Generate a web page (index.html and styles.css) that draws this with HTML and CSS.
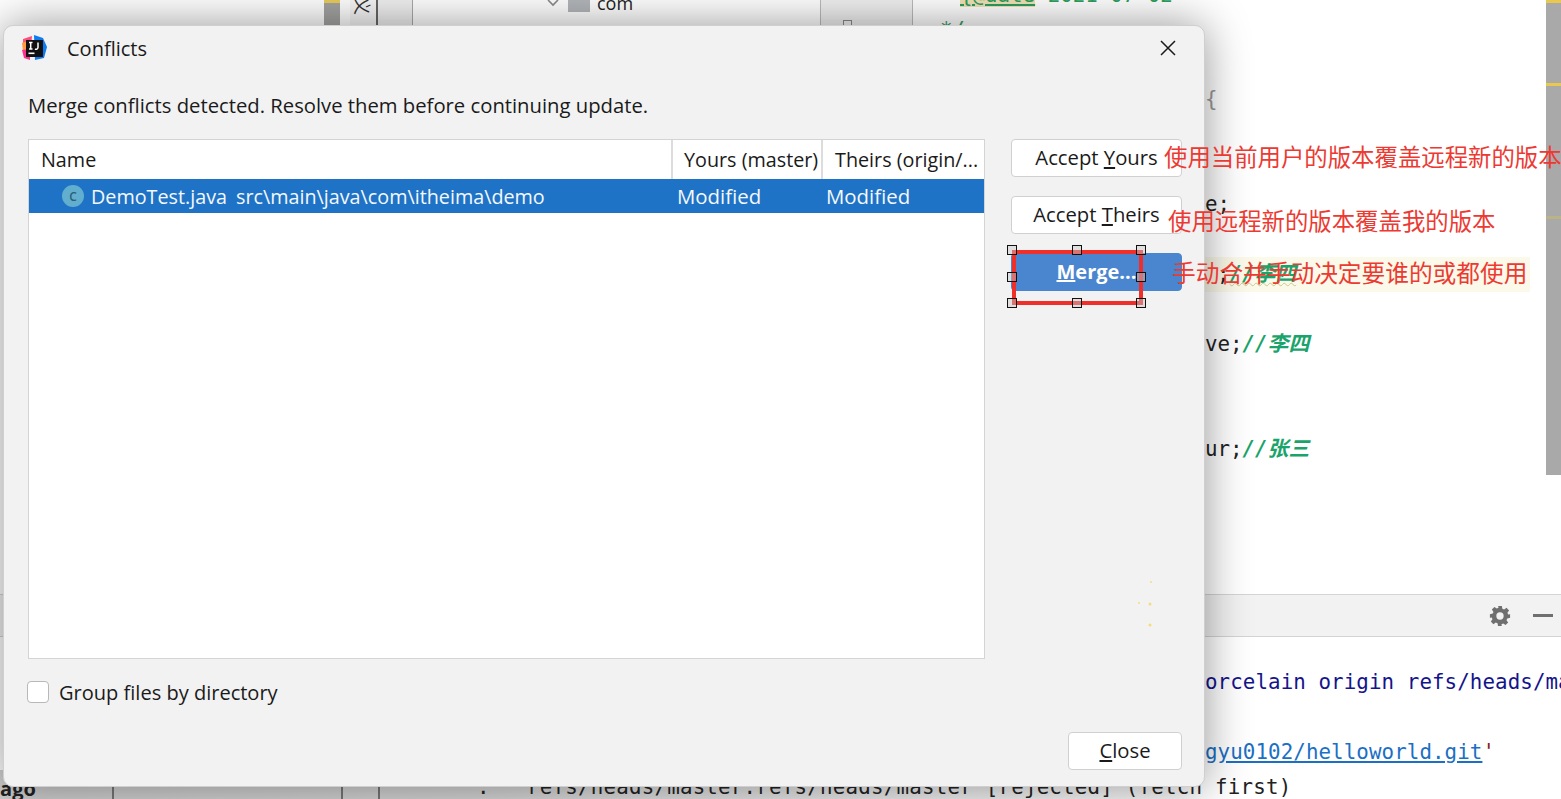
FILE: index.html
```html
<!DOCTYPE html>
<html lang="en">
<head>
<meta charset="utf-8">
<title>Conflicts</title>
<link rel="stylesheet" href="styles.css">
</head>
<body>
<div class="screen">
  <div class="ide">
    <div class="editor">
      <div class="tree-strip">
        <div class="bar-gray"></div>
        <div class="vtab"><span class="vtab-text">义</span></div>
        <div class="tab-gap"></div>
        <div class="tree-item">
          <svg class="chev" viewBox="0 0 12 8"><path d="M1 1l5 5 5-5" fill="none" stroke="#8a8a8a" stroke-width="1.6"/></svg>
          <span class="folder"></span>
          <span class="tree-label">com</span>
        </div>
        <div class="gutter"><span class="fold-mark"></span></div>
        <div class="doc-line"><span class="tag">{@date</span> 2021-07-02<span class="doc-end">*/</span></div>
      </div>
      <div class="code">
        <div class="line"></div>
        <div class="line line-brace">{</div>
        <div class="line"></div>
        <div class="line"></div>
        <div class="line">e;</div>
        <div class="line"></div>
        <div class="line line-hl"><span class="semi">;</span><span class="cmt squig">//李四</span></div>
        <div class="line"></div>
        <div class="line">ve;<span class="cmt">//李四</span></div>
        <div class="line"></div>
        <div class="line"></div>
        <div class="line">ur;<span class="cmt">//张三</span></div>
      </div>
      <div class="scrollbar">
        <span class="mark mark-a"></span>
        <span class="mark mark-b"></span>
        <span class="mark mark-c"></span>
      </div>
    </div>
    <div class="tool-head">
      <svg class="gear" viewBox="0 0 24 24"><path fill="#6f6f6f" fill-rule="evenodd" d="M10 1h4l.6 3.1 1.9.8 2.6-1.8 2.8 2.8-1.8 2.6.8 1.9L23 10v4l-3.1.6-.8 1.9 1.8 2.6-2.8 2.8-2.6-1.8-1.9.8L13.9 23h-4l-.6-3.1-1.9-.8-2.6 1.8L2 18.100l1.800-2.600-.8-1.900L1 14v-4l3.100-.6.8-1.900L3.100 4.900l2.800-2.800 2.600 1.800 1.900-.8zM12 8a4 4 0 100 8 4 4 0 000-8z"/></svg>
      <span class="minus"></span>
    </div>
    <div class="console">
      <div class="cline navy">orcelain origin refs/heads/ma</div>
      <div class="cline"></div>
      <div class="cline"><a class="link">gyu0102/helloworld.git</a><span class="quote">'</span></div>
      <div class="cline status-row">
        <span class="st-band"></span>
        <b class="ago">ago</b>
        <span class="st-div st-a"></span>
        <span class="st-div st-b"></span>
        <span class="st-div st-c"></span>
        <span class="st-colon">:</span>
        <span class="st-text">refs/heads/master:refs/heads/master [rejected] (fetch first)</span>
      </div>
    </div>
  </div>

  <div class="dialog">
    <header class="title-bar">
      <svg class="app-logo" viewBox="0 0 28 28">
        <path fill="#fd4f7c" d="M3 5l9-3-1 12-8 1z"/>
        <path fill="#ff9a3d" d="M2 9l6-2v8l-5 2z"/>
        <path fill="#0d7bf2" d="M14 1l9 3 4 9-3 11-9 2z"/>
        <path fill="#ff318c" d="M2 16l8-1v11l-6-2z"/>
        <rect x="6" y="6" width="17" height="17" fill="#111"/>
        <rect x="8.500" y="18.500" width="6" height="1.600" fill="#fff"/>
        <path fill="none" stroke="#fff" stroke-width="1.500" d="M9 8.500h3.500M10.700 8.500v6.500M9 15h3.500M18 8.500v5a2 2 0 01-3 1.500"/>
      </svg>
      <span class="title">Conflicts</span>
      <svg class="close-x" viewBox="0 0 16 16"><path d="M1 1l14 14M15 1L1 15" stroke="#1a1a1a" stroke-width="1.500" fill="none"/></svg>
    </header>
    <p class="message">Merge conflicts detected. Resolve them before continuing update.</p>
    <div class="main">
      <div class="table">
        <div class="thead">
          <div class="th th-name">Name</div>
          <div class="th th-yours">Yours (master)</div>
          <div class="th th-theirs">Theirs (origin/...</div>
        </div>
        <div class="row">
          <div class="td td-name">
            <span class="class-icon">C</span>
            <span>DemoTest.java</span>
            <span class="path">src\main\java\com\itheima\demo</span>
          </div>
          <div class="td td-yours">Modified</div>
          <div class="td td-theirs">Modified</div>
        </div>
      </div>
      <div class="actions">
        <button class="btn">Accept <u>Y</u>ours</button>
        <button class="btn">Accept <u>T</u>heirs</button>
        <button class="btn btn-primary"><u>M</u>erge...</button>
        <svg class="specks" viewBox="0 0 40 60"><g fill="#f7dc7c"><circle cx="20" cy="3" r="1"/><circle cx="8" cy="24" r="1"/><circle cx="19" cy="25" r="1.500"/><circle cx="19" cy="46" r="1.500"/></g></svg>
      </div>
    </div>
    <label class="group-row"><span class="checkbox"></span><span>Group files by directory</span></label>
    <footer class="footer"><button class="btn btn-close"><u>C</u>lose</button></footer>
  </div>

  <div class="note note-a">使用当前用户的版本覆盖远程新的版本</div>
  <div class="note note-b">使用远程新的版本覆盖我的版本</div>
  <div class="note note-c">手动合并手动决定要谁的或都使用</div>

  <div class="selection">
    <span class="handle h-tl"></span><span class="handle h-tc"></span><span class="handle h-tr"></span>
    <span class="handle h-ml"></span><span class="handle h-mr"></span>
    <span class="handle h-bl"></span><span class="handle h-bc"></span><span class="handle h-br"></span>
  </div>
</div>
</body>
</html>
```
FILE: styles.css
```css
* { box-sizing: border-box; }
html, body { margin: 0; padding: 0; height: 100%; background: #fff; overflow: hidden; }
.screen { position: relative; width: 1561px; height: 799px; overflow: hidden; font-family: "Open Sans", "Noto Sans", sans-serif; }

/* background IDE */
.ide { display: flex; flex-direction: column; height: 799px; background: #fff; }
.editor { position: relative; flex: none; height: 594px; display: flex; flex-direction: column; overflow: hidden; }
.tree-strip { display: flex; flex: none; height: 0; align-items: flex-start; padding-left: 324px; }
.bar-gray { flex: none; width: 16px; height: 30px; background: #a3a3a1; border-top: 3px solid #e8cd5a; }
.vtab { flex: none; width: 28px; height: 30px; margin-left: 10px; background: #f6f6f6; border-right: 2px solid #666; overflow: hidden; }
.vtab-text { display: block; font: 18px "Noto Sans CJK SC", sans-serif; transform: rotate(90deg); color: #333; margin-top: -3px; }
.tab-gap { flex: none; width: 35px; height: 30px; background: #f0f0f0; border-right: 1px solid #aaa; }
.tree-item { flex: none; width: 407px; height: 30px; display: flex; align-items: flex-start; padding-left: 134px; gap: 8px; }
.chev { width: 12px; height: 8px; margin-top: -1px; }
.folder { width: 22px; height: 12px; background: #b3b6ba; margin-left: 1px; }
.tree-label { font-size: 18px; line-height: 18px; margin-top: -6px; color: #222; margin-left: -1px; }
.gutter { flex: none; width: 93px; height: 30px; background: #f0f0f0; border-left: 1px solid #bbb; border-right: 1px solid #bbb; padding: 20px 0 0 22px; }
.fold-mark { display: block; width: 9px; height: 9px; border: 1.500px solid #888; }
.doc-line { flex: none; margin: -22px 0 0 47px; font: 20.800px/35px "DejaVu Sans Mono", monospace; color: #2e9e5e; white-space: pre; }
.tag { background: #f0e2b6; text-decoration: underline; }
.doc-end { display: block; margin-left: -20px; font-style: italic; }
.code { flex: none; padding: 0 0 0 1205px; margin-top: 47px; font: 20.800px/35px "DejaVu Sans Mono", monospace; color: #222; }
.line { height: 35px; white-space: pre; }
.line-brace { color: #999; }
.line-hl { background: #fbf9e9; margin-right: 31px; }
.semi { margin-left: 12px; }
.cmt { color: #1aa36a; font-style: italic; font-weight: 700; font-family: "DejaVu Sans Mono", "Noto Sans CJK SC", monospace; }
.squig { text-decoration: underline wavy #c9c98a 1px; }
.scrollbar { position: absolute; right: 0; top: 0; width: 15px; height: 475px; background: #a9a9a9; }
.mark { position: absolute; left: 0; width: 15px; height: 3px; }
.mark-a { top: 0; background: #e8c94e; }
.mark-b { top: 83px; background: #e8c94e; }
.mark-c { top: 216px; background: #b9b387; }
.tool-head { flex: none; height: 43px; background: #f2f2f2; border-top: 1px solid #d4d4d4; border-bottom: 1px solid #d4d4d4; display: flex; align-items: center; justify-content: flex-end; gap: 20px; padding-right: 8px; }
.gear { width: 22px; height: 22px; margin-right: 2px; }
.minus { width: 20px; height: 2.500px; background: #6f6f6f; }
.console { flex: 1; padding: 28px 0 0 1205px; font: 20.800px/35px "DejaVu Sans Mono", monospace; letter-spacing: .09px; color: #222; }
.cline { height: 35px; white-space: pre; }
.navy { color: #14148c; }
.link { color: #1b6fc4; text-decoration: underline; }
.quote { color: #8a1c1c; }
.status-row { position: relative; }
.st-text { position: absolute; left: -678px; top: 0; letter-spacing: .22px; }
.st-colon { position: absolute; left: -728px; top: 0; }
.ago { position: absolute; left: -1205px; top: 1px; font-family: "Open Sans", sans-serif; font-size: 20px; }
.st-band { position: absolute; left: -1205px; top: 0; width: 1205px; height: 35px; background: linear-gradient(90deg, #cfcfcf 0, #d6d6d6 40%, #f4f4f4 85%, #fff 100%); }
.st-div { position: absolute; top: 17px; width: 2px; height: 20px; background: #777; }
.st-a { left: -1093px; }
.st-b { left: -864px; }
.st-c { left: -827px; }

/* dialog */
.dialog { position: absolute; left: 3px; top: 25px; width: 1202px; height: 762px; display: flex; flex-direction: column; background: #f2f2f2; border-radius: 10px; border: 1px solid #cfcfcf; box-shadow: 0 0 45px rgba(0,0,0,.42); padding: 0 22px 16px 24px; color: #1a1a1a; font-size: 20px; }
.title-bar { flex: none; height: 44px; display: flex; align-items: center; margin-left: -8px; margin-bottom: 2px; }
.app-logo { width: 28px; height: 28px; flex: none; margin-right: 19px; }
.title { font-size: 20px; }
.close-x { width: 16px; height: 16px; margin-left: auto; margin-right: 6px; }
.message { margin: 0; height: 67px; padding-top: 20px; font-size: 20.250px; line-height: 27px; }
.main { flex: none; display: flex; height: 520px; gap: 26px; }
.table { width: 957px; background: #fff; border: 1px solid #d4d4d4; font-size: 19.750px; }
.thead { display: flex; height: 39px; }
.th { display: flex; align-items: center; }
.th-name { width: 644px; padding-left: 12px; border-right: 2px solid #dcdcdc; }
.th-yours { width: 150px; padding-left: 11px; border-right: 2px solid #dcdcdc; white-space: nowrap; }
.th-theirs { flex: 1; padding-left: 12px; white-space: nowrap; overflow: hidden; }
.row { display: flex; height: 34px; background: #1f73c6; color: #f4f8fc; align-items: center; }
.td-name { width: 648px; display: flex; align-items: center; padding-left: 33px; }
.class-icon { width: 22px; height: 22px; border-radius: 50%; background: #62aecf; color: #2d5f78; font-size: 12px; font-weight: 600; display: flex; align-items: center; justify-content: center; margin-right: 7px; }
.path { margin-left: 9px; }
.td-yours { width: 149px; font-size: 20.400px; }
.td-theirs { font-size: 20.400px; }
.actions { position: relative; flex: none; width: 171px; display: flex; flex-direction: column; gap: 19px; }
.btn { height: 38px; width: 171px; background: #fff; border: 1.500px solid #d0d0d0; border-radius: 4px; color: #1a1a1a; font-family: inherit; font-size: 20.250px; padding: 0 0 2px; }
.btn-primary { background: #4a86cf; border-color: #4a86cf; color: #fff; font-weight: 700; font-size: 20px; }
.specks { position: absolute; left: 120px; top: 440px; width: 40px; height: 60px; }
.group-row { flex: none; display: flex; align-items: center; gap: 10px; margin: 21px 0 0 -1px; height: 24px; font-size: 20.050px; }
.checkbox { width: 22px; height: 22px; background: #fff; border: 1.500px solid #b8b8b8; border-radius: 4px; }
.footer { flex: 1; display: flex; justify-content: flex-end; align-items: flex-end; }
.btn-close { width: 114px; height: 38px; }

/* annotations */
.note { position: absolute; color: #ec3a32; font: 23.400px/32px "Noto Sans CJK SC", sans-serif; white-space: nowrap; }
.note-a { left: 1164px; top: 140px; }
.note-b { left: 1168px; top: 204px; }
.note-c { left: 1172px; top: 256px; font-size: 23.700px; }
.selection { position: absolute; left: 1012px; top: 250px; width: 131px; height: 55px; border: 4px solid #ee2f2a; }
.handle { position: absolute; width: 10px; height: 10px; border: 1.500px solid #111; background: rgba(200,200,200,.45); }
.h-tl { left: -9px; top: -9px; }
.h-tc { left: 56px; top: -9px; }
.h-tr { left: 120px; top: -9px; }
.h-ml { left: -9px; top: 18px; }
.h-mr { left: 120px; top: 18px; }
.h-bl { left: -9px; top: 44px; }
.h-bc { left: 56px; top: 44px; }
.h-br { left: 120px; top: 44px; }
```
